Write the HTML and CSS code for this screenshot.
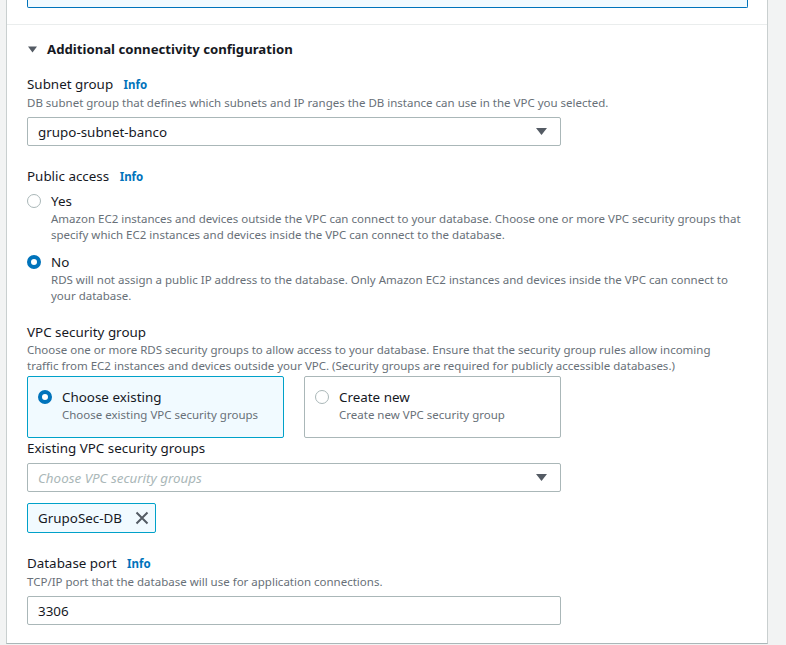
FILE: index.html
```html
<!DOCTYPE html>
<html lang="en">
<head>
<meta charset="utf-8">
<title>Additional connectivity configuration</title>
<link rel="stylesheet" href="styles.css">
</head>
<body>
<div class="page">
  <div class="panel">
    <div class="top-section">
      <div class="focused-input"></div>
    </div>
    <div class="content">
      <div class="expander">
        <svg class="exp-caret" width="9" height="7" viewBox="0 0 9 7"><path d="M0 0.5h9L4.5 6.5z" fill="#545b64"/></svg>
        <span>Additional connectivity configuration</span>
      </div>

      <div class="field field-first">
        <div class="label">Subnet group <a class="info">Info</a></div>
        <div class="desc">DB subnet group that defines which subnets and IP ranges the DB instance can use in the VPC you selected.</div>
        <div class="select">
          <span class="value">grupo-subnet-banco</span>
          <svg class="caret" width="11" height="7" viewBox="0 0 11 7"><path d="M0 0h11L5.5 7z" fill="#545b64"/></svg>
        </div>
      </div>

      <div class="field field-public">
        <div class="label">Public access <a class="info">Info</a></div>
        <div class="radio-group">
          <div class="radio-option">
            <span class="radio"></span>
            <div class="radio-text">
              <div class="radio-label">Yes</div>
              <div class="desc">Amazon EC2 instances and devices outside the VPC can connect to your database. Choose one or more VPC security groups that specify which EC2 instances and devices inside the VPC can connect to the database.</div>
            </div>
          </div>
          <div class="radio-option">
            <span class="radio checked"></span>
            <div class="radio-text">
              <div class="radio-label">No</div>
              <div class="desc">RDS will not assign a public IP address to the database. Only Amazon EC2 instances and devices inside the VPC can connect to your database.</div>
            </div>
          </div>
        </div>
      </div>

      <div class="field field-vpc">
        <div class="label">VPC security group</div>
        <div class="desc">Choose one or more RDS security groups to allow access to your database. Ensure that the security group rules allow incoming traffic from EC2 instances and devices outside your VPC. (Security groups are required for publicly accessible databases.)</div>
        <div class="tiles">
          <div class="tile selected">
            <span class="radio checked"></span>
            <div class="radio-text">
              <div class="radio-label">Choose existing</div>
              <div class="desc">Choose existing VPC security groups</div>
            </div>
          </div>
          <div class="tile">
            <span class="radio"></span>
            <div class="radio-text">
              <div class="radio-label">Create new</div>
              <div class="desc">Create new VPC security group</div>
            </div>
          </div>
        </div>
        <div class="label sub-label">Existing VPC security groups</div>
        <div class="select">
          <span class="placeholder">Choose VPC security groups</span>
          <svg class="caret" width="11" height="7" viewBox="0 0 11 7"><path d="M0 0h11L5.5 7z" fill="#545b64"/></svg>
        </div>
        <div class="token">
          <span>GrupoSec-DB</span>
          <svg class="dismiss" width="14" height="14" viewBox="0 0 14 14"><path d="M1.5 1.5l11 11M12.5 1.5l-11 11" stroke="#545b64" stroke-width="2" fill="none"/></svg>
        </div>
      </div>

      <div class="field field-port">
        <div class="label">Database port <a class="info">Info</a></div>
        <div class="desc">TCP/IP port that the database will use for application connections.</div>
        <div class="input">3306</div>
      </div>
    </div>
  </div>
</div>
</body>
</html>
```

FILE: styles.css
```css
* { box-sizing: border-box; }
html, body {
  margin: 0;
  padding: 0;
  background: #f2f3f3;
  font-family: "Noto Sans", "Open Sans", Arial, sans-serif;
  color: #16191f;
}
.page {
  padding-left: 6px;
  width: 768px;
  height: 645px;
  overflow: hidden;
}
.panel {
  background: #fff;
  border-left: 1px solid #c9cfcf;
  border-right: 1px solid #c9cfcf;
  border-bottom: 1px solid #aab7b8;
  width: 762px;
  height: 644px;
}
.top-section {
  height: 25px;
  padding: 0 19px 0 20px;
  border-bottom: 1px solid #eaeded;
}
.focused-input {
  height: 8px;
  background: #f1faff;
  border: 1px solid #0073bb;
  border-top: none;
  border-radius: 0 0 2px 2px;
}
.content {
  padding: 13px 23px 0 20px;
}
.expander {
  display: flex;
  align-items: center;
  height: 22px;
  font-size: 13.2px;
  font-weight: 700;
  color: #16191f;
  padding-left: 1px;
}
.exp-caret { margin-right: 10px; }
.field { margin-top: 20px; }
.field-first { margin-top: 14px; }
.field-public { margin-top: 20px; }
.label {
  font-size: 13.4px;
  line-height: 20px;
  color: #16191f;
}
.info {
  font-size: 11.5px;
  font-weight: 700;
  color: #0073bb;
  margin-left: 7px;
}
.desc {
  font-size: 11.5px;
  line-height: 16px;
  color: #687078;
}
.select, .input {
  margin-top: 6px;
  width: 534px;
  height: 29px;
  border: 1px solid #aab7b8;
  border-radius: 2px;
  display: flex;
  align-items: center;
  justify-content: space-between;
  padding: 0 13px 0 10px;
  font-size: 13.4px;
  color: #16191f;
}
.placeholder {
  font-style: italic;
  color: #aab7b8;
}
.radio-group { margin-top: 4px; }
.radio-option {
  display: flex;
  align-items: flex-start;
}
.radio-option + .radio-option { margin-top: 9px; }
.radio {
  flex: none;
  width: 14px;
  height: 14px;
  border-radius: 50%;
  border: 1px solid #aab7b8;
  background: #fff;
  margin-top: 3px;
  margin-right: 10px;
}
.radio.checked {
  border: 4.5px solid #0073bb;
}
.radio-label {
  font-size: 13.4px;
  line-height: 20px;
}
.field-vpc { margin-top: 18px; }
.tiles {
  margin-top: 2px;
  display: grid;
  grid-template-columns: 1fr 1fr;
  gap: 20px;
  width: 534px;
}
.tile {
  height: 62px;
  border: 1px solid #aab7b8;
  border-radius: 2px;
  padding: 10px 10px;
  display: flex;
  align-items: flex-start;
}
.tile.selected {
  background: #f1faff;
  border-color: #00a1c9;
}
.sub-label { margin-top: 0; }
.sub-label + .select { margin-top: 5px; }
.token {
  margin-top: 11px;
  width: 129px;
  height: 30px;
  border: 1px solid #00a1c9;
  background: #f1faff;
  border-radius: 2px;
  display: flex;
  align-items: center;
  justify-content: space-between;
  padding: 0 6px 0 10px;
  font-size: 13.4px;
}
.field-port { margin-top: 20px; }
```
